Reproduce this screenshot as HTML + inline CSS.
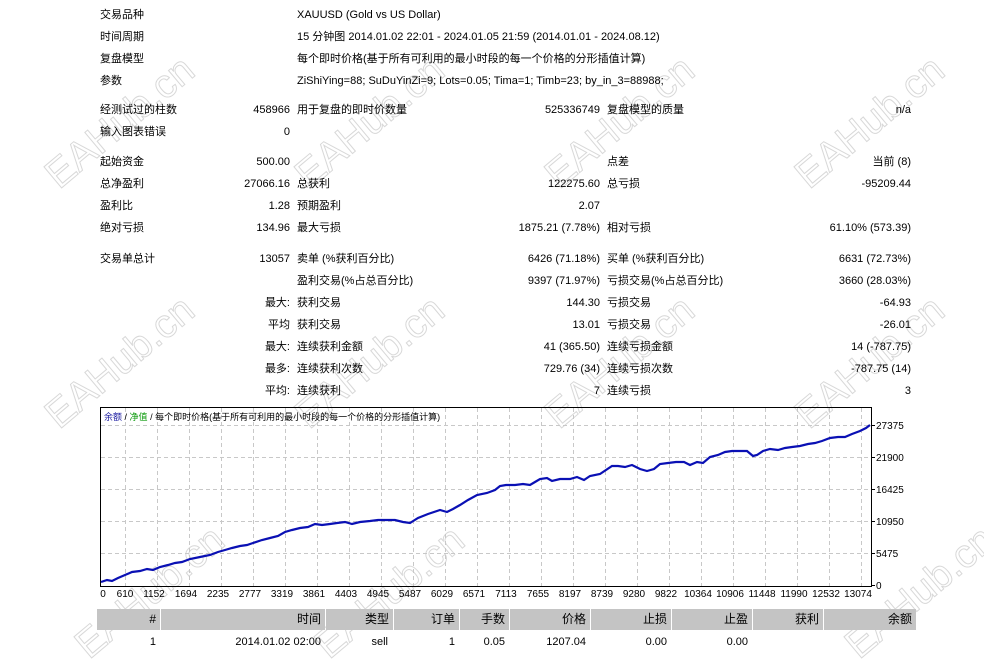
<!DOCTYPE html>
<html><head><meta charset="utf-8"><style>
body{margin:0;width:984px;height:640px;background:#fff;overflow:hidden;position:relative;font-family:"Liberation Sans","Noto Sans CJK SC",sans-serif;font-size:11px;color:#000}
.t{position:absolute;white-space:nowrap;line-height:14px}
.r{text-align:right}
.wm{position:absolute;font-size:40px;color:transparent;-webkit-text-stroke:1px #d8d8d8;transform:rotate(-40deg);white-space:nowrap;font-family:"Liberation Sans",sans-serif}
.th{position:absolute;top:609px;height:21px;background:#c4c4c4;line-height:21px;text-align:right;font-size:12px;box-sizing:border-box;padding-right:4px}
</style></head><body>
<div class="wm" style="left:30px;top:100px">EAHub.cn</div>
<div class="wm" style="left:280px;top:100px">EAHub.cn</div>
<div class="wm" style="left:530px;top:100px">EAHub.cn</div>
<div class="wm" style="left:780px;top:100px">EAHub.cn</div>
<div class="wm" style="left:30px;top:340px">EAHub.cn</div>
<div class="wm" style="left:280px;top:340px">EAHub.cn</div>
<div class="wm" style="left:530px;top:340px">EAHub.cn</div>
<div class="wm" style="left:780px;top:340px">EAHub.cn</div>
<div class="wm" style="left:60px;top:570px">EAHub.cn</div>
<div class="wm" style="left:300px;top:570px">EAHub.cn</div>
<div class="wm" style="left:830px;top:570px">EAHub.cn</div>

<div class="t" style="left:100px;top:8px">交易品种</div><div class="t" style="left:297px;top:8px">XAUUSD (Gold vs US Dollar)</div>
<div class="t" style="left:100px;top:30px">时间周期</div><div class="t" style="left:297px;top:30px">15 分钟图 2014.01.02 22:01 - 2024.01.05 21:59 (2014.01.01 - 2024.08.12)</div>
<div class="t" style="left:100px;top:52px">复盘模型</div><div class="t" style="left:297px;top:52px">每个即时价格(基于所有可利用的最小时段的每一个价格的分形插值计算)</div>
<div class="t" style="left:100px;top:74px">参数</div><div class="t" style="left:297px;top:74px">ZiShiYing=88; SuDuYinZi=9; Lots=0.05; Tima=1; Timb=23; by_in_3=88988;</div>

<div class="t" style="left:100px;top:103px">经测试过的柱数</div><div class="t r" style="right:694px;top:103px">458966</div><div class="t" style="left:297px;top:103px">用于复盘的即时价数量</div><div class="t r" style="right:384px;top:103px">525336749</div><div class="t" style="left:607px;top:103px">复盘模型的质量</div><div class="t r" style="right:73px;top:103px">n/a</div>
<div class="t" style="left:100px;top:125px">输入图表错误</div><div class="t r" style="right:694px;top:125px">0</div>

<div class="t" style="left:100px;top:155px">起始资金</div><div class="t r" style="right:694px;top:155px">500.00</div><div class="t" style="left:607px;top:155px">点差</div><div class="t r" style="right:73px;top:155px">当前 (8)</div>
<div class="t" style="left:100px;top:177px">总净盈利</div><div class="t r" style="right:694px;top:177px">27066.16</div><div class="t" style="left:297px;top:177px">总获利</div><div class="t r" style="right:384px;top:177px">122275.60</div><div class="t" style="left:607px;top:177px">总亏损</div><div class="t r" style="right:73px;top:177px">-95209.44</div>
<div class="t" style="left:100px;top:199px">盈利比</div><div class="t r" style="right:694px;top:199px">1.28</div><div class="t" style="left:297px;top:199px">预期盈利</div><div class="t r" style="right:384px;top:199px">2.07</div>
<div class="t" style="left:100px;top:221px">绝对亏损</div><div class="t r" style="right:694px;top:221px">134.96</div><div class="t" style="left:297px;top:221px">最大亏损</div><div class="t r" style="right:384px;top:221px">1875.21 (7.78%)</div><div class="t" style="left:607px;top:221px">相对亏损</div><div class="t r" style="right:73px;top:221px">61.10% (573.39)</div>

<div class="t" style="left:100px;top:252px">交易单总计</div><div class="t r" style="right:694px;top:252px">13057</div><div class="t" style="left:297px;top:252px">卖单 (%获利百分比)</div><div class="t r" style="right:384px;top:252px">6426 (71.18%)</div><div class="t" style="left:607px;top:252px">买单 (%获利百分比)</div><div class="t r" style="right:73px;top:252px">6631 (72.73%)</div>
<div class="t" style="left:297px;top:274px">盈利交易(%占总百分比)</div><div class="t r" style="right:384px;top:274px">9397 (71.97%)</div><div class="t" style="left:607px;top:274px">亏损交易(%占总百分比)</div><div class="t r" style="right:73px;top:274px">3660 (28.03%)</div>
<div class="t r" style="right:694px;top:296px">最大:</div><div class="t" style="left:297px;top:296px">获利交易</div><div class="t r" style="right:384px;top:296px">144.30</div><div class="t" style="left:607px;top:296px">亏损交易</div><div class="t r" style="right:73px;top:296px">-64.93</div>
<div class="t r" style="right:694px;top:318px">平均</div><div class="t" style="left:297px;top:318px">获利交易</div><div class="t r" style="right:384px;top:318px">13.01</div><div class="t" style="left:607px;top:318px">亏损交易</div><div class="t r" style="right:73px;top:318px">-26.01</div>
<div class="t r" style="right:694px;top:340px">最大:</div><div class="t" style="left:297px;top:340px">连续获利金额</div><div class="t r" style="right:384px;top:340px">41 (365.50)</div><div class="t" style="left:607px;top:340px">连续亏损金额</div><div class="t r" style="right:73px;top:340px">14 (-787.75)</div>
<div class="t r" style="right:694px;top:362px">最多:</div><div class="t" style="left:297px;top:362px">连续获利次数</div><div class="t r" style="right:384px;top:362px">729.76 (34)</div><div class="t" style="left:607px;top:362px">连续亏损次数</div><div class="t r" style="right:73px;top:362px">-787.75 (14)</div>
<div class="t r" style="right:694px;top:384px">平均:</div><div class="t" style="left:297px;top:384px">连续获利</div><div class="t r" style="right:384px;top:384px">7</div><div class="t" style="left:607px;top:384px">连续亏损</div><div class="t r" style="right:73px;top:384px">3</div>

<svg style="position:absolute;left:0;top:0" width="984" height="640">
<g stroke="#c8c8c8" stroke-dasharray="4,3" stroke-width="1">
<path d="M101 425.5H871M101 457.5H871M101 489.5H871M101 521.5H871M101 553.5H871"/>
<path d="M125.5 408V586M157.5 408V586M189.5 408V586M221.5 408V586M253.5 408V586M285.5 408V586M317.5 408V586M349.5 408V586M381.5 408V586M413.5 408V586M445.5 408V586M477.5 408V586M509.5 408V586M541.5 408V586M573.5 408V586M605.5 408V586M637.5 408V586M669.5 408V586M701.5 408V586M733.5 408V586M765.5 408V586M797.5 408V586M829.5 408V586M861.5 408V586"/>
</g>
<rect x="100.5" y="407.5" width="771" height="179" fill="none" stroke="#000"/>
<g stroke="#000"><path d="M871 425.5h4M871 457.5h4M871 489.5h4M871 521.5h4M871 553.5h4M871 585.5h4"/></g>
<polyline fill="none" stroke="#0a10b4" stroke-width="2.2" points="101,582 107,580 112,581 118,578 125,575 132,572 140,571 147,569 153,570 160,567 168,565 175,563 182,562 190,559 200,557 210,555 218,552 225,550 232,548 240,546 247,545 253,543 262,540 270,538 278,536 285,532 292,530 300,528 308,527 315,524 322,525 330,524 337,523 345,522 352,524 360,522 370,521 378,520 386,520 395,520 403,522 410,523 418,518 428,514 440,510 447,512 453,509 460,505 468,500 477,495 487,493 495,490 500,486 506,485 515,485 523,484 530,485 535,482 540,479 547,478 552,481 560,479 570,479 577,477 584,480 590,476 600,474 612,466 618,466 625,467 632,465 640,469 647,471 654,469 660,464 668,463 676,462 684,462 690,465 697,462 703,463 710,457 718,455 725,452 732,451 740,451 747,451 753,456 757,455 763,451 770,449 778,450 785,448 792,447 800,446 808,444 815,443 822,441 830,438 838,437 845,437 852,434 860,431 866,428 870,425"/>
<text x="104" y="420" font-size="9" fill="#1a1aa0" font-family="Liberation Sans,Noto Sans CJK SC,sans-serif">余额 <tspan fill="#000">/</tspan> <tspan fill="#0a9a0a">净值</tspan> <tspan fill="#000">/ 每个即时价格(基于所有可利用的最小时段的每一个价格的分形插值计算)</tspan></text>
<g font-size="10" font-family="Liberation Sans,sans-serif" fill="#000">
<text x="876" y="429">27375</text><text x="876" y="461">21900</text><text x="876" y="493">16425</text><text x="876" y="525">10950</text><text x="876" y="557">5475</text><text x="876" y="589">0</text>
<g text-anchor="middle">
<text x="103" y="597">0</text><text x="125" y="597">610</text><text x="154" y="597">1152</text><text x="186" y="597">1694</text><text x="218" y="597">2235</text><text x="250" y="597">2777</text><text x="282" y="597">3319</text><text x="314" y="597">3861</text><text x="346" y="597">4403</text><text x="378" y="597">4945</text><text x="410" y="597">5487</text><text x="442" y="597">6029</text><text x="474" y="597">6571</text><text x="506" y="597">7113</text><text x="538" y="597">7655</text><text x="570" y="597">8197</text><text x="602" y="597">8739</text><text x="634" y="597">9280</text><text x="666" y="597">9822</text><text x="698" y="597">10364</text><text x="730" y="597">10906</text><text x="762" y="597">11448</text><text x="794" y="597">11990</text><text x="826" y="597">12532</text><text x="858" y="597">13074</text>
</g></g>
</svg>

<div class="th" style="left:97px;width:63px">#</div>
<div class="th" style="left:161px;width:164px">时间</div>
<div class="th" style="left:326px;width:67px">类型</div>
<div class="th" style="left:394px;width:65px">订单</div>
<div class="th" style="left:460px;width:49px">手数</div>
<div class="th" style="left:510px;width:80px">价格</div>
<div class="th" style="left:591px;width:80px">止损</div>
<div class="th" style="left:672px;width:80px">止盈</div>
<div class="th" style="left:753px;width:70px">获利</div>
<div class="th" style="left:824px;width:92px">余额</div>
<div class="t r" style="right:828px;top:635px">1</div>
<div class="t r" style="right:663px;top:635px">2014.01.02 02:00</div>
<div class="t r" style="right:596px;top:635px">sell</div>
<div class="t r" style="right:529px;top:635px">1</div>
<div class="t r" style="right:479px;top:635px">0.05</div>
<div class="t r" style="right:398px;top:635px">1207.04</div>
<div class="t r" style="right:317px;top:635px">0.00</div>
<div class="t r" style="right:236px;top:635px">0.00</div>
</body></html>
